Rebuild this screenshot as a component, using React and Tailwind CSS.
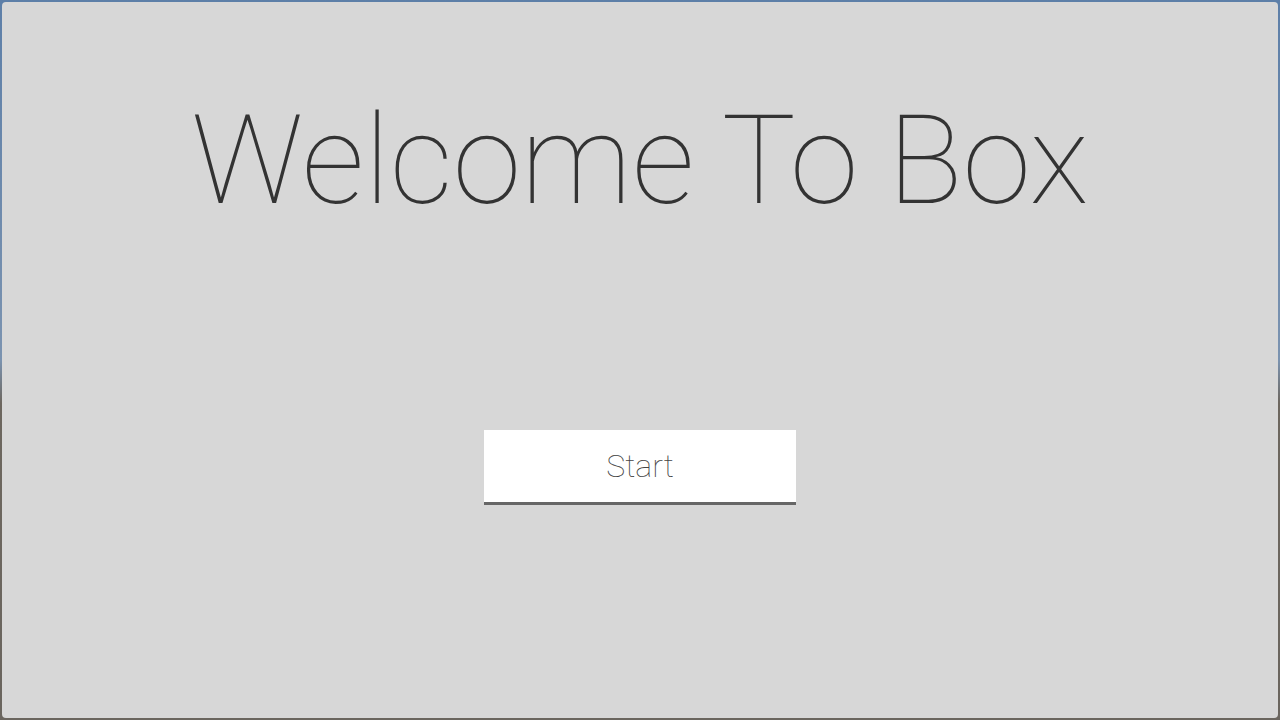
export default function App() {
  return (
    <div className="w-[1280px] h-[720px] p-[2px] bg-[linear-gradient(to_bottom,#5d7fa8_0%,#7b93b0_50%,#6d675f_56%,#6a655e_100%)]" style={{ fontFamily: 'Roboto, "Liberation Sans", sans-serif' }}>
      <div className="w-full h-full rounded-[4px] bg-[#d7d7d7] flex flex-col items-center">
        <h1 className="mt-[89px] text-[124px] leading-[140px] font-thin text-[#333333]">Welcome To Box</h1>
        <button className="mt-[199px] w-[312px] h-[75px] bg-white border-b-[3px] border-[#666666] text-[32px] font-thin text-[#444444] flex items-center justify-center pb-[1px]">
          Start
        </button>
      </div>
    </div>
  );
}
